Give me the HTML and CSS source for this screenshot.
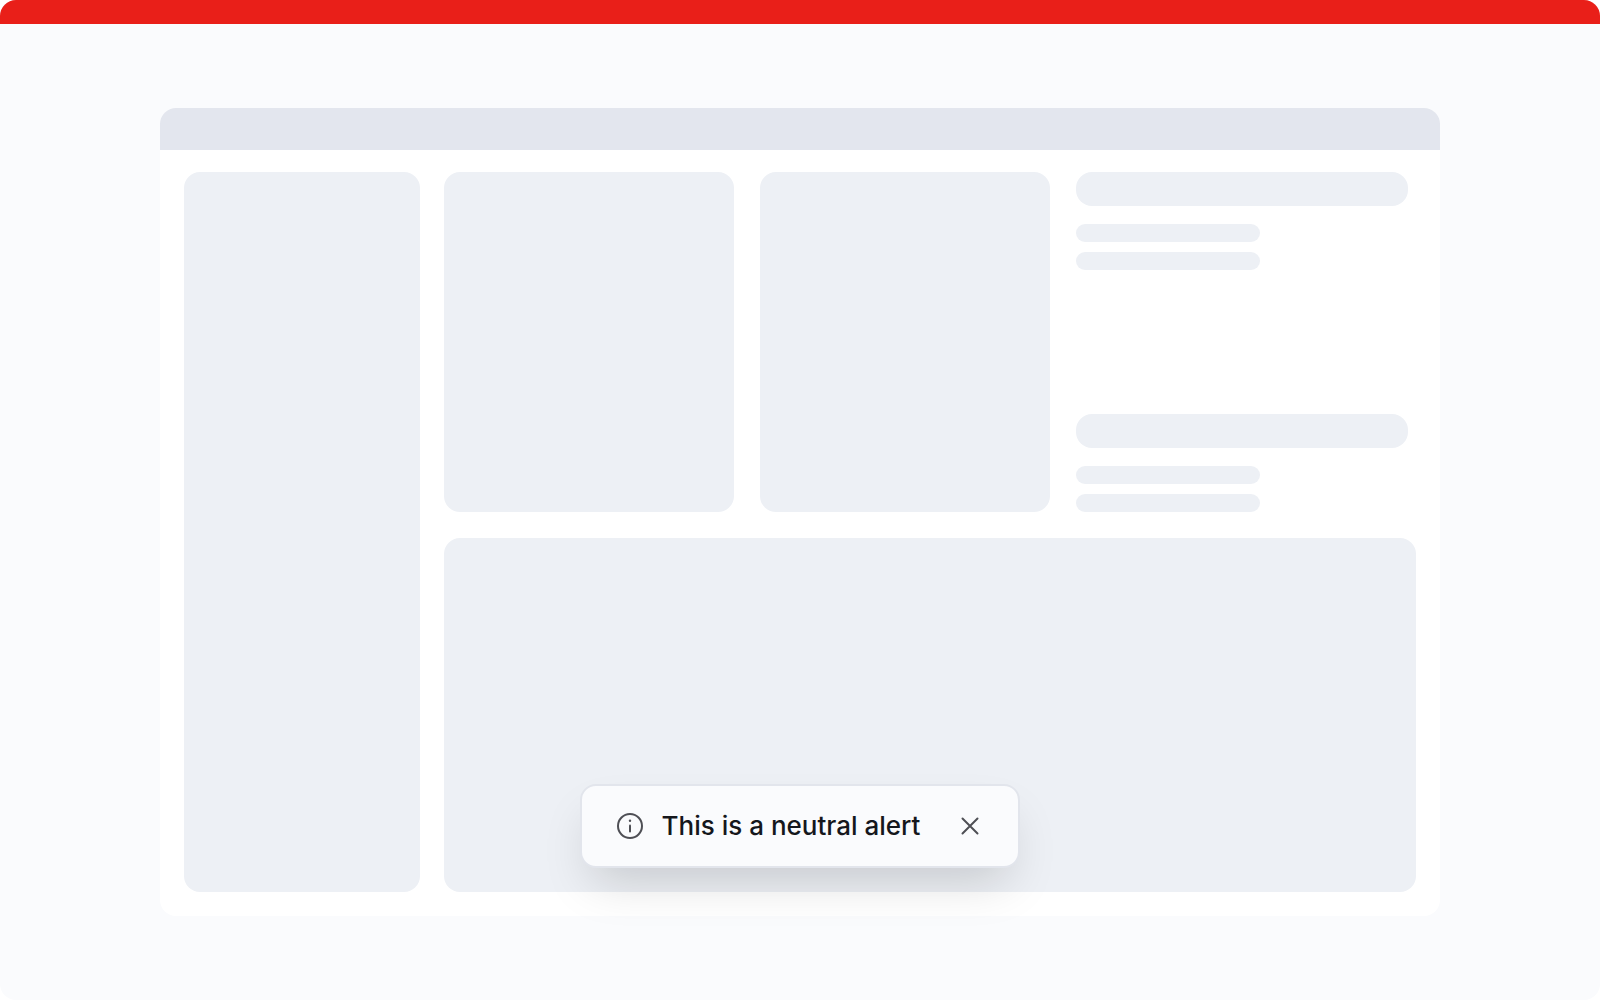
FILE: index.html
```
<!DOCTYPE html>
<html lang="en">
<head>
<meta charset="utf-8">
<meta name="viewport" content="width=device-width, initial-scale=1">
<title>Neutral alert</title>
<link rel="stylesheet" href="styles.css">
</head>
<body>
<div class="page">
    <div class="topbar"></div>
    <div class="stage">
        <div class="window">
            <div class="window-header"></div>
            <div class="window-body">
                <div class="block sidebar"></div>
                <div class="main">
                    <div class="cards">
                        <div class="block"></div>
                        <div class="block"></div>
                        <div class="details">
                            <div class="group">
                                <div class="title"></div>
                                <div class="line"></div>
                                <div class="line"></div>
                            </div>
                            <div class="group">
                                <div class="title"></div>
                                <div class="line"></div>
                                <div class="line"></div>
                            </div>
                        </div>
                    </div>
                    <div class="block wide"></div>
                </div>
            </div>
            <!-- alert over the window content -->
            <div class="alert-wrap">
                <div class="alert" role="status">
                    <svg class="icon" viewBox="0 0 32 32" aria-hidden="true">
                        <circle cx="16" cy="16" r="12" />
                        <path d="M16 15.5v6" />
                        <circle class="dot" cx="16" cy="10.7" r="1.2" />
                    </svg>
                    <span class="alert-text">This is a neutral alert</span>
                    <button type="button" class="close" aria-label="Close">
                        <svg class="icon" viewBox="0 0 32 32" aria-hidden="true">
                            <path d="M8.5 8.5l15 15M23.5 8.5l-15 15" />
                        </svg>
                    </button>
                </div>
            </div>
        </div>
    </div>
</div>
</body>
</html>
```

FILE: styles.css
```
* {
    box-sizing: border-box;
}
body {
    margin: 0;
    background: #fff;
    font-family: Inter, "Liberation Sans", sans-serif;
}
.page {
    display: flex;
    flex-direction: column;
    min-height: 100vh;
    background: #fafbfd;
    border-radius: 16px;
    overflow: hidden;
}
.topbar {
    height: 24px;
    background: #e91f19;
}
.stage {
    flex: 1;
    display: flex;
    padding: 84px 10%;
}
.window {
    position: relative;
    flex: 1;
    display: flex;
    flex-direction: column;
    background: #fff;
    border-radius: 16px;
}
.window-header {
    height: 42px;
    background: #e3e6ee;
    border-radius: 16px 16px 0 0;
}
.window-body {
    flex: 1;
    display: grid;
    grid-template-columns: 236fr 972fr;
    gap: 24px;
    padding: 22px 24px 24px;
}
.block {
    background: #edf0f5;
    border-radius: 16px;
}
.main {
    display: grid;
    grid-template-rows: 340fr 354fr;
    gap: 26px;
}
.cards {
    display: grid;
    grid-template-columns: 290fr 290fr 340fr;
    gap: 26px;
}
.details {
    display: flex;
    flex-direction: column;
    justify-content: space-between;
    padding-right: 8px;
}
.title {
    height: 34px;
    margin-bottom: 18px;
    background: #edf0f5;
    border-radius: 16px;
}
.line {
    width: 184px;
    height: 18px;
    background: #edf0f5;
    border-radius: 9px;
}
.line + .line {
    margin-top: 10px;
}
.alert-wrap {
    position: absolute;
    left: 0;
    right: 0;
    bottom: 48px;
    display: flex;
    justify-content: center;
}
.alert {
    display: flex;
    align-items: center;
    padding: 24px 32px;
    background: #fafbfd;
    border: 2px solid #e2e5ec;
    border-radius: 16px;
    box-shadow: 0 24px 48px -12px rgba(0, 0, 0, 0.17);
}
.icon {
    display: block;
    width: 32px;
    height: 32px;
    fill: none;
    stroke: #4e4f55;
    stroke-width: 2;
    stroke-linecap: round;
}
.dot {
    fill: #4e4f55;
    stroke: none;
}
.alert-text {
    margin: 0 34px 0 16px;
    color: #15171c;
    font-size: 26px;
    font-weight: 500;
    line-height: 32px;
}
.close {
    padding: 0;
    background: none;
    border: 0;
    cursor: pointer;
}
```
